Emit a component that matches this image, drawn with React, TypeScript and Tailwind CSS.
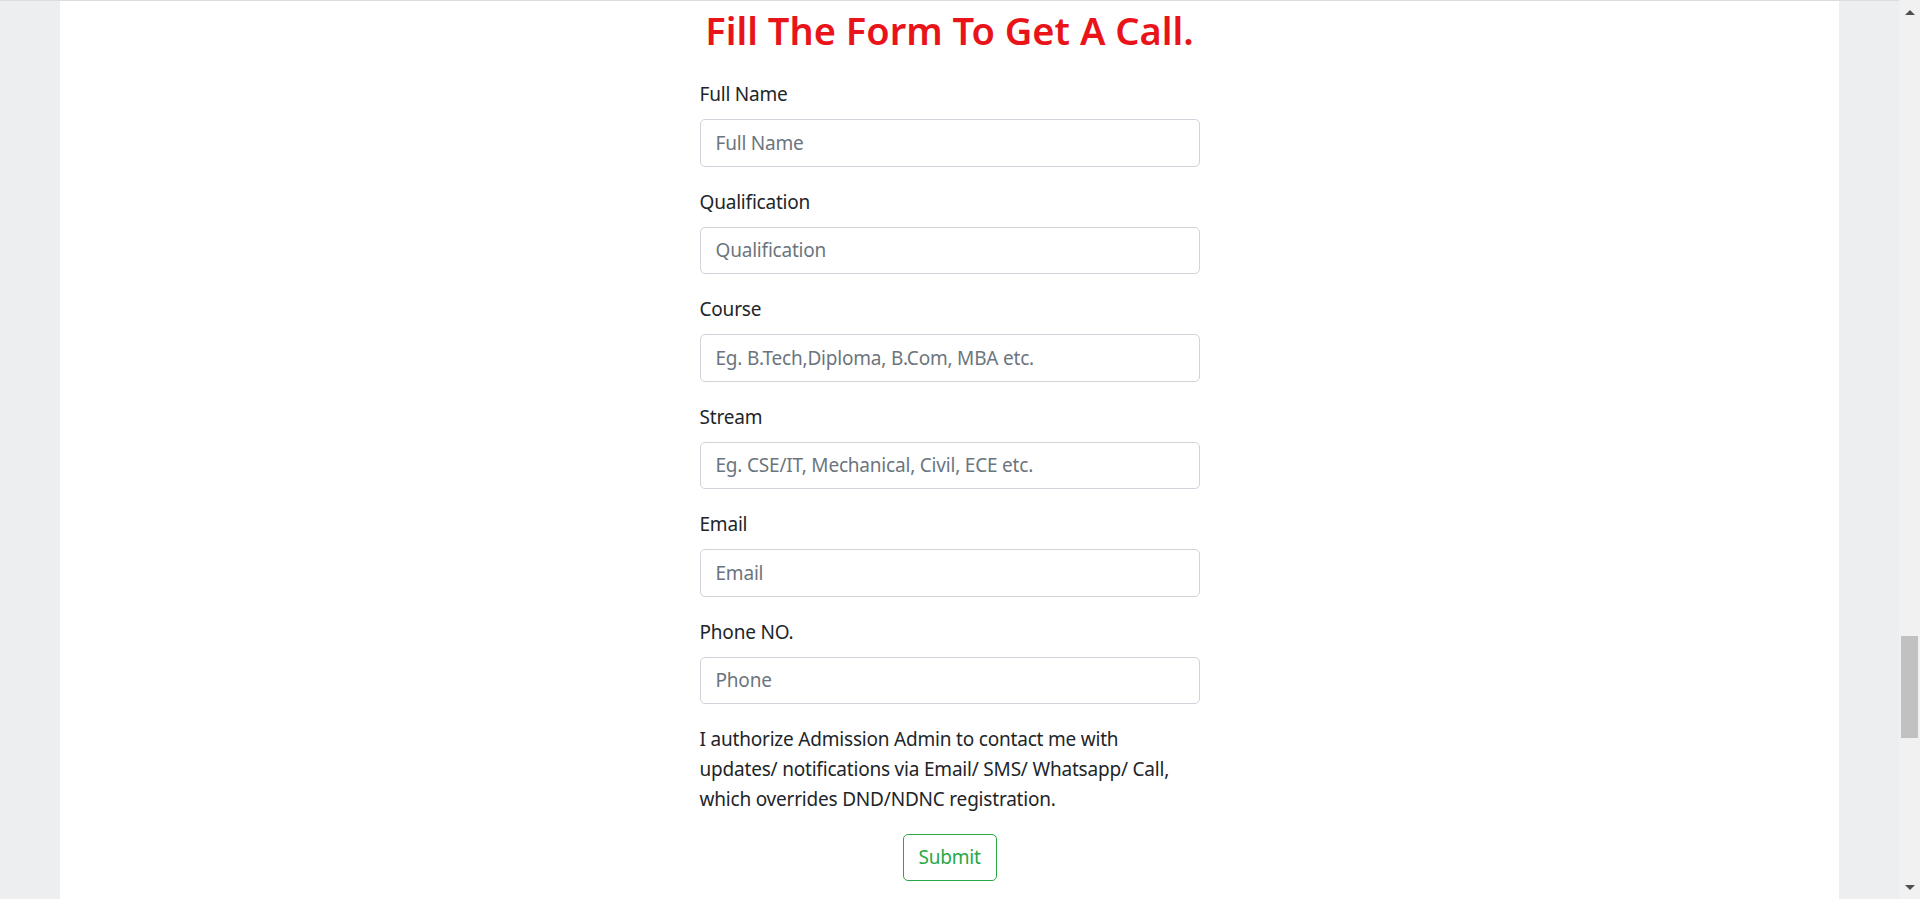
import React from "react";

const FIELDS = [
  { label: "Full Name", placeholder: "Full Name" },
  { label: "Qualification", placeholder: "Qualification" },
  { label: "Course", placeholder: "Eg. B.Tech,Diploma, B.Com, MBA etc." },
  { label: "Stream", placeholder: "Eg. CSE/IT, Mechanical, Civil, ECE etc." },
  { label: "Email", placeholder: "Email" },
  { label: "Phone NO.", placeholder: "Phone" },
] as const;

function Scrollbar() {
  return (
    <div className="flex h-full w-[21px] shrink-0 flex-col items-center bg-[#f1f1f1]">
      <div className="flex h-[24px] w-full items-center justify-center">
        <div className="h-0 w-0 border-x-[5px] border-b-[5px] border-x-transparent border-b-[#505050]" />
      </div>
      <div className="flex w-full flex-1 flex-col pl-[2px] pr-[2px]">
        <div className="h-[612px] shrink-0" />
        <div className="h-[102px] w-full bg-[#c1c1c1]" />
      </div>
      <div className="flex h-[24px] w-full items-center justify-center">
        <div className="h-0 w-0 border-x-[5px] border-t-[5px] border-x-transparent border-t-[#505050]" />
      </div>
    </div>
  );
}

export default function App() {
  return (
    <div
      className="flex h-[899px] w-full overflow-hidden bg-[#edeef0] text-[#212529]"
      style={{ fontFamily: '"Noto Sans", "Open Sans", sans-serif' }}
    >
      <div className="flex h-full flex-1 flex-col border-t border-[#dadce0]">
        <div className="flex h-full">
          <div className="w-[60px] shrink-0" />
          <main className="h-full w-[1779px] shrink-0 bg-white">
            <form className="mx-auto flex w-[500px] flex-col pt-[5px] tracking-[-0.2px]">
              <h1 className="mb-[25px] whitespace-nowrap text-center text-[38px] font-semibold leading-[48px] tracking-normal text-[#e8141a]">
                Fill The Form To Get A Call.
              </h1>
              {FIELDS.map((f) => (
                <div key={f.label} className="mb-5 flex flex-col">
                  <label className="mb-[10px] text-[19px] leading-[30px]">{f.label}</label>
                  <input
                    type="text"
                    placeholder={f.placeholder}
                    className="h-[47.5px] w-full rounded-[5px] border border-[#ced4da] px-[15px] text-[19px] tracking-[-0.2px] outline-none placeholder:text-[#6c757d]"
                  />
                </div>
              ))}
              <p className="mb-5 whitespace-nowrap text-[19px] leading-[30px]">
                I authorize Admission Admin to contact me with
                <br />
                updates/ notifications via Email/ SMS/ Whatsapp/ Call,
                <br />
                which overrides DND/NDNC registration.
              </p>
              <div className="flex justify-center">
                <button
                  type="button"
                  className="h-[47px] w-[94px] rounded-[5px] border border-[#28a745] text-[19px] tracking-[-0.2px] text-[#28a745]"
                >
                  Submit
                </button>
              </div>
            </form>
          </main>
        </div>
      </div>
      <Scrollbar />
    </div>
  );
}
